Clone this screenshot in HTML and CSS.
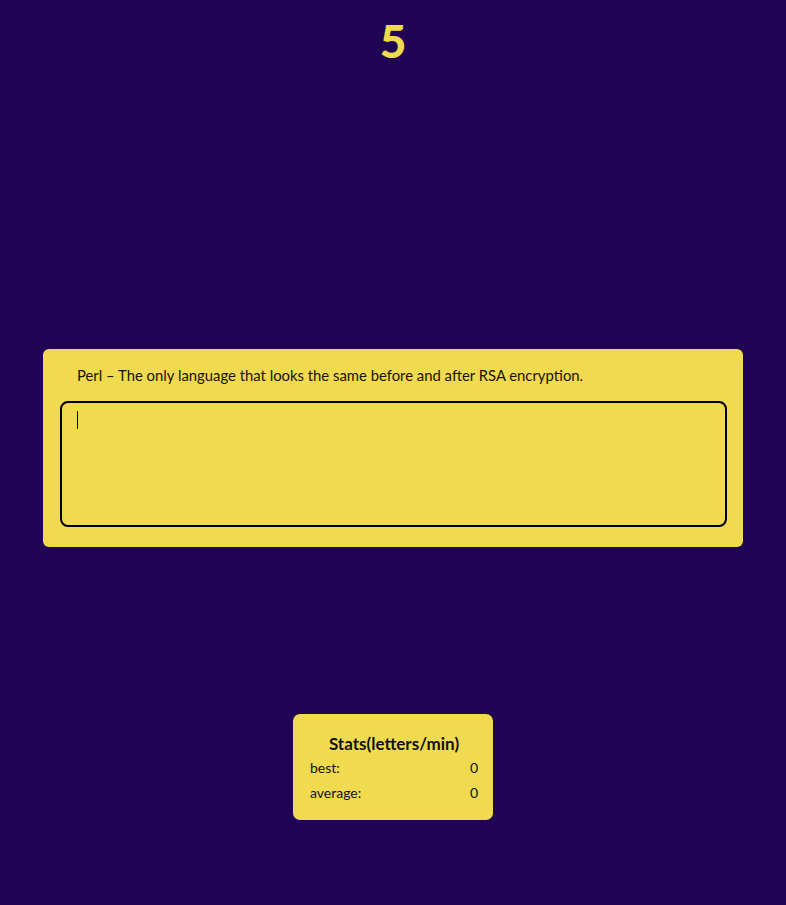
FILE: index.html
```html
<!DOCTYPE html>
<html>
<head>
<meta charset="utf-8">
<link rel="stylesheet" href="styles.css">
</head>
<body>
<div class="page">
  <h1 class="counter">5</h1>
  <div class="card">
    <p class="quote">Perl – The only language that looks the same before and after RSA encryption.</p>
    <div class="input"><span class="caret"></span></div>
  </div>
  <div class="stats">
    <div class="stats-title">Stats(letters/min)</div>
    <div class="row"><span>best:</span><span>0</span></div>
    <div class="row"><span>average:</span><span>0</span></div>
  </div>
</div>
</body>
</html>
```

FILE: styles.css
```css
html, body {
  margin: 0;
  padding: 0;
  background: #1f0553;
}
body {
  font-family: Lato, "Open Sans", sans-serif;
  color: #111;
}
.page {
  display: flex;
  flex-direction: column;
  align-items: center;
  min-height: 905px;
}
.counter {
  margin: 14px 0 0;
  font-size: 46px;
  line-height: 54px;
  font-weight: 900;
  color: #f0da4f;
}
.card {
  margin-top: 281px;
  width: 700px;
  box-sizing: border-box;
  background: #f0da4f;
  border-radius: 6px;
  padding: 16px 16px 20px 17px;
}
.quote {
  margin: 0 0 16px 17px;
  font-size: 14.85px;
  line-height: 20px;
  color: #1a1200;
}
.input {
  height: 126px;
  box-sizing: border-box;
  border: 2px solid #000;
  border-radius: 8px;
  padding: 8px 15px;
}
.caret {
  display: block;
  width: 1px;
  height: 18px;
  background: #000;
}
.stats {
  margin-top: 167px;
  width: 200px;
  box-sizing: border-box;
  background: #f0da4f;
  border-radius: 7px;
  padding: 19px 15px 15px 17px;
}
.stats-title {
  text-align: center;
  font-weight: 700;
  font-size: 17px;
  line-height: 22px;
}
.row {
  display: flex;
  justify-content: space-between;
  font-size: 14px;
  line-height: 25px;
}
```
